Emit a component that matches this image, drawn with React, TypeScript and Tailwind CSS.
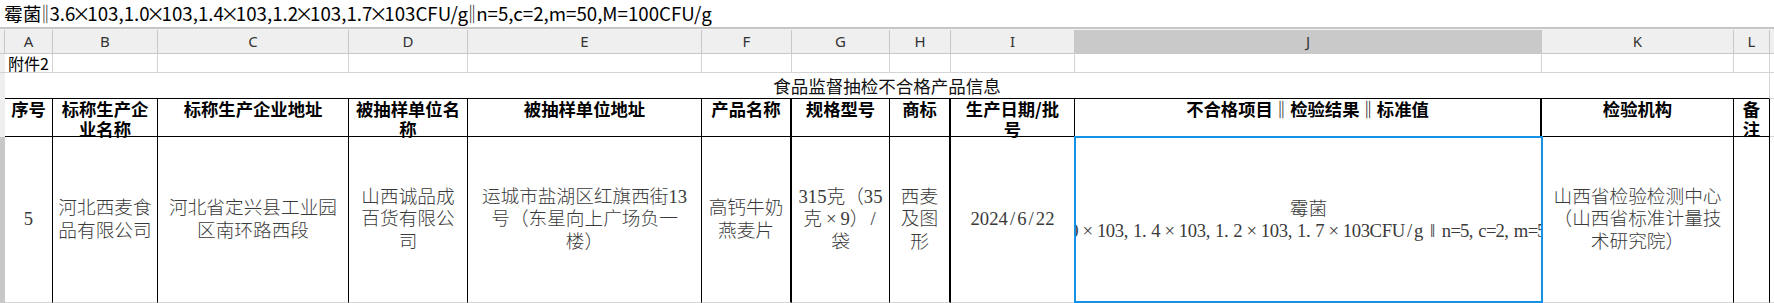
import React from 'react';

const cols = ['A', 'B', 'C', 'D', 'E', 'F', 'G', 'H', 'I', 'J', 'K', 'L'];

const heads: string[][] = [
    ['序号'],
    ['标称生产企', '业名称'],
    ['标称生产企业地址'],
    ['被抽样单位名', '称'],
    ['被抽样单位地址'],
    ['产品名称'],
    ['规格型号'],
    ['商标'],
    ['生产日期/批', '号'],
    ['不合格项目‖检验结果‖标准值'],
    ['检验机构'],
    ['备', '注'],
];

const data: string[][] = [
    ['5'],
    ['河北西麦食', '品有限公司'],
    ['河北省定兴县工业园', '区南环路西段'],
    ['山西诚品成', '百货有限公', '司'],
    ['运城市盐湖区红旗西街13', '号（东星向上广场负一', '楼）'],
    ['高钙牛奶', '燕麦片'],
    ['315克（35', '克×9）/', '袋'],
    ['西麦', '及图', '形'],
    ['2024/6/22'],
    [],
    ['山西省检验检测中心', '（山西省标准计量技', '术研究院）'],
    [],
];

const result = '3.6×103,1.0×103,1.4×103,1.2×103,1.7×103CFU/g‖n=5,c=2,m=50,M=100CFU/g';

// header: ‖ is drawn a full em wide
function wide(text: string) {
    return text.split(/(‖)/).map((part, i) =>
        part === '‖' ? (
            <span key={i} className="inline-block w-[1em] text-center">
                {part}
            </span>
        ) : (
            <React.Fragment key={i}>{part}</React.Fragment>
        ),
    );
}

function mono(text: string) {
    return text.split(/([×‖,./=])/).map((part, i) => {
        if (part === '×' || part === '‖') {
            return (
                <span key={i} className="inline-block w-[1em] text-center">
                    {part}
                </span>
            );
        }
        if (part === ',' || part === '.') {
            return (
                <span key={i} className="inline-block w-[0.5em] text-left">
                    {part}
                </span>
            );
        }
        if (part === '/' || part === '=') {
            return (
                <span key={i} className="inline-block w-[0.5em] text-center">
                    {part}
                </span>
            );
        }
        return <React.Fragment key={i}>{part}</React.Fragment>;
    });
}

// formula bar: narrow separators
function bar(text: string) {
    return text.split(/([×‖])/).map((part, i) =>
        part === '×' ? (
            <span key={i} className="inline-flex w-[12px] justify-center">
                {part}
            </span>
        ) : part === '‖' ? (
            <span key={i} className="inline-flex w-[8px] justify-center">
                {part}
            </span>
        ) : (
            <React.Fragment key={i}>{part}</React.Fragment>
        ),
    );
}

const App: React.FC = () => {
    return (
        <div className="h-[303px] w-[1774px] overflow-hidden bg-white">
            {/* Formula bar */}
            <div className="flex h-[27px] items-center pl-[4px] font-['Noto_Sans_CJK_SC',sans-serif] text-[18.7px] whitespace-nowrap text-black">
                {bar('霉菌‖3.6×103,1.0×103,1.4×103,1.2×103,1.7×103CFU/g‖n=5,c=2,m=50,M=100CFU/g')}
            </div>
            <div className="h-[2px] bg-[#c6c6c6]" />
            <div className="h-px bg-[#f4f4f4]" />

            <div className="grid grid-cols-[5px_48px_105px_191px_119px_234px_90px_98px_61px_124px_467px_192px_36px_1fr] grid-rows-[24px_19px_26px_38px_166px]">
                {/* Column letters */}
                <div className="border-r border-b border-[#c8c8c8] bg-[#efefef]" />
                {cols.map((c) => (
                    <div
                        key={c}
                        className={`flex items-center justify-center border-r border-b border-[#c8c8c8] font-['Noto_Sans',sans-serif] text-[15px] text-[#333] ${
                            c === 'J' ? 'bg-[#c9c9c9]' : 'bg-[#efefef]'
                        }`}
                    >
                        {c}
                    </div>
                ))}
                <div className="border-b border-[#c8c8c8] bg-[#efefef]" />

                {/* Row 1 */}
                <div className="border-b border-[#d4d4d4] bg-[#efefef]" />
                <div className="border-r border-b border-[#d4d4d4] pl-[3px] font-['Noto_Sans_CJK_SC',sans-serif] text-[16px] leading-[19px] whitespace-nowrap text-black">
                    附件2
                </div>
                {cols.slice(1).map((c) => (
                    <div key={c} className="border-r border-b border-[#d4d4d4]" />
                ))}
                <div className="border-b border-[#d4d4d4]" />

                {/* Row 2: title */}
                <div className="bg-[#efefef]" />
                <div className="col-span-12 flex items-end justify-center border-r border-b border-r-[#d4d4d4] border-b-black pb-[1px] font-['Noto_Sans_CJK_SC',sans-serif] text-[17.5px] leading-[23px] text-[#111]">
                    食品监督抽检不合格产品信息
                </div>
                <div className="border-b border-[#d4d4d4]" />

                {/* Row 3: table header */}
                <div className="bg-[#efefef]" />
                {heads.map((lines, i) => (
                    <div
                        key={i}
                        className={`flex flex-col items-center border-b border-black font-['Noto_Sans_CJK_SC',sans-serif] text-[17.33px] leading-[20px] font-bold whitespace-nowrap text-black ${
                            i === 5 || i === 7 || i === 9 ? 'border-r-2' : 'border-r'
                        }`}
                    >
                        {lines.map((l, j) => (
                            <div key={j}>{wide(l)}</div>
                        ))}
                    </div>
                ))}
                <div className="border-b border-[#d4d4d4]" />

                {/* Row 4: record */}
                <div className="bg-[#c8c8c8]" />
                {data.map((lines, i) =>
                    i === 9 ? (
                        <div key={i} className="relative">
                            <div className="flex h-full flex-col items-center justify-center overflow-hidden font-['Liberation_Serif','Noto_Sans_CJK_SC',serif] text-[18.67px] leading-[22.5px] font-light whitespace-nowrap text-[#3a3a3a]">
                                <div>霉菌</div>
                                <div className="ml-[22px] tracking-[-0.4px]">{mono(result)}</div>
                            </div>
                            <div className="pointer-events-none absolute -top-px right-[-1px] bottom-0 -left-px border-2 border-[#1592e6]" />
                        </div>
                    ) : (
                        <div
                            key={i}
                            className={`flex flex-col items-center justify-center border-b border-r-black border-b-[#d4d4d4] font-['Liberation_Serif','Noto_Sans_CJK_SC',serif] text-[18.67px] leading-[22.5px] font-light whitespace-nowrap text-[#3a3a3a] ${
                                i === 5 || i === 7 ? 'border-r-2' : 'border-r'
                            }`}
                        >
                            {lines.map((l, j) => (
                                <div key={j}>{mono(l)}</div>
                            ))}
                        </div>
                    ),
                )}
                <div className="border-b border-[#d4d4d4]" />
            </div>
        </div>
    );
};

export default App;
